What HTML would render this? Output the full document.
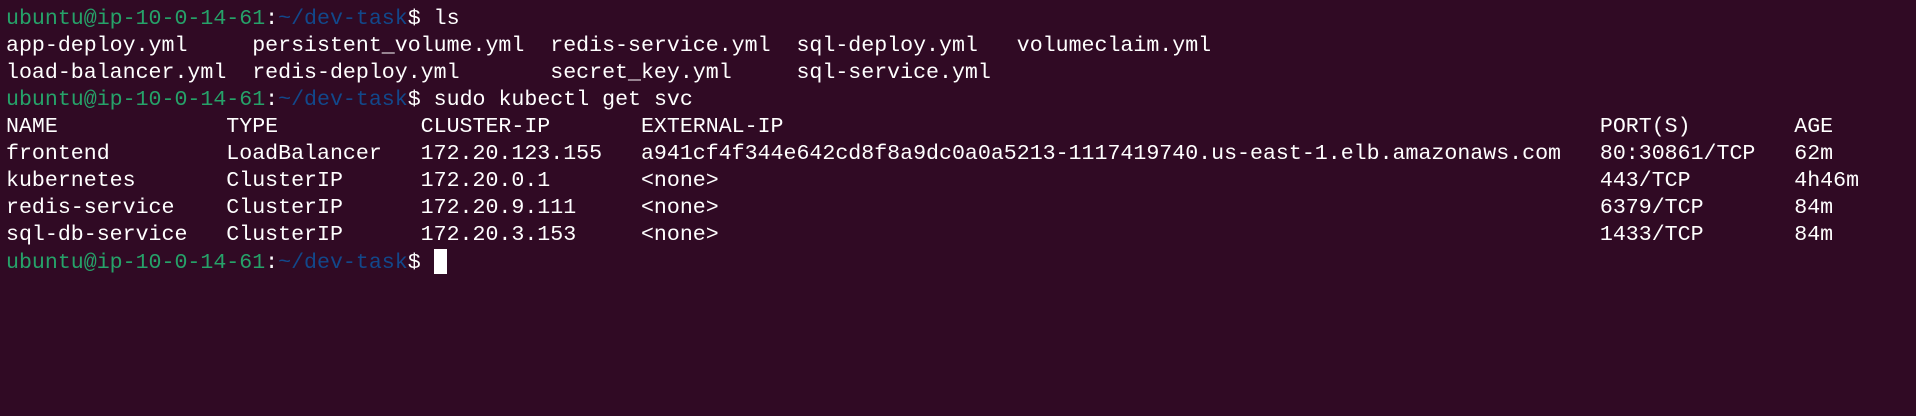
<!DOCTYPE html>
<html><head><meta charset="utf-8"><style>
html,body{margin:0;padding:0;background:#300a24;width:1916px;height:416px;overflow:hidden}
pre{margin:0;padding:6px 0 0 6px;font-family:"Liberation Mono","DejaVu Sans Mono",monospace;font-size:21.6px;line-height:27px;color:#ffffff;letter-spacing:0}
.g{color:#26a269}.b{color:#12488b}
.c{display:inline-block;width:13px;height:25px;background:#fff;vertical-align:-6px}
</style></head><body><pre><span class="g">ubuntu@ip-10-0-14-61</span>:<span class="b">~/dev-task</span>$ ls
app-deploy.yml     persistent_volume.yml  redis-service.yml  sql-deploy.yml   volumeclaim.yml
load-balancer.yml  redis-deploy.yml       secret_key.yml     sql-service.yml
<span class="g">ubuntu@ip-10-0-14-61</span>:<span class="b">~/dev-task</span>$ sudo kubectl get svc
NAME             TYPE           CLUSTER-IP       EXTERNAL-IP                                                               PORT(S)        AGE
frontend         LoadBalancer   172.20.123.155   a941cf4f344e642cd8f8a9dc0a0a5213-1117419740.us-east-1.elb.amazonaws.com   80:30861/TCP   62m
kubernetes       ClusterIP      172.20.0.1       &lt;none&gt;                                                                    443/TCP        4h46m
redis-service    ClusterIP      172.20.9.111     &lt;none&gt;                                                                    6379/TCP       84m
sql-db-service   ClusterIP      172.20.3.153     &lt;none&gt;                                                                    1433/TCP       84m
<span class="g">ubuntu@ip-10-0-14-61</span>:<span class="b">~/dev-task</span>$ <span class="c"></span></pre></body></html>
